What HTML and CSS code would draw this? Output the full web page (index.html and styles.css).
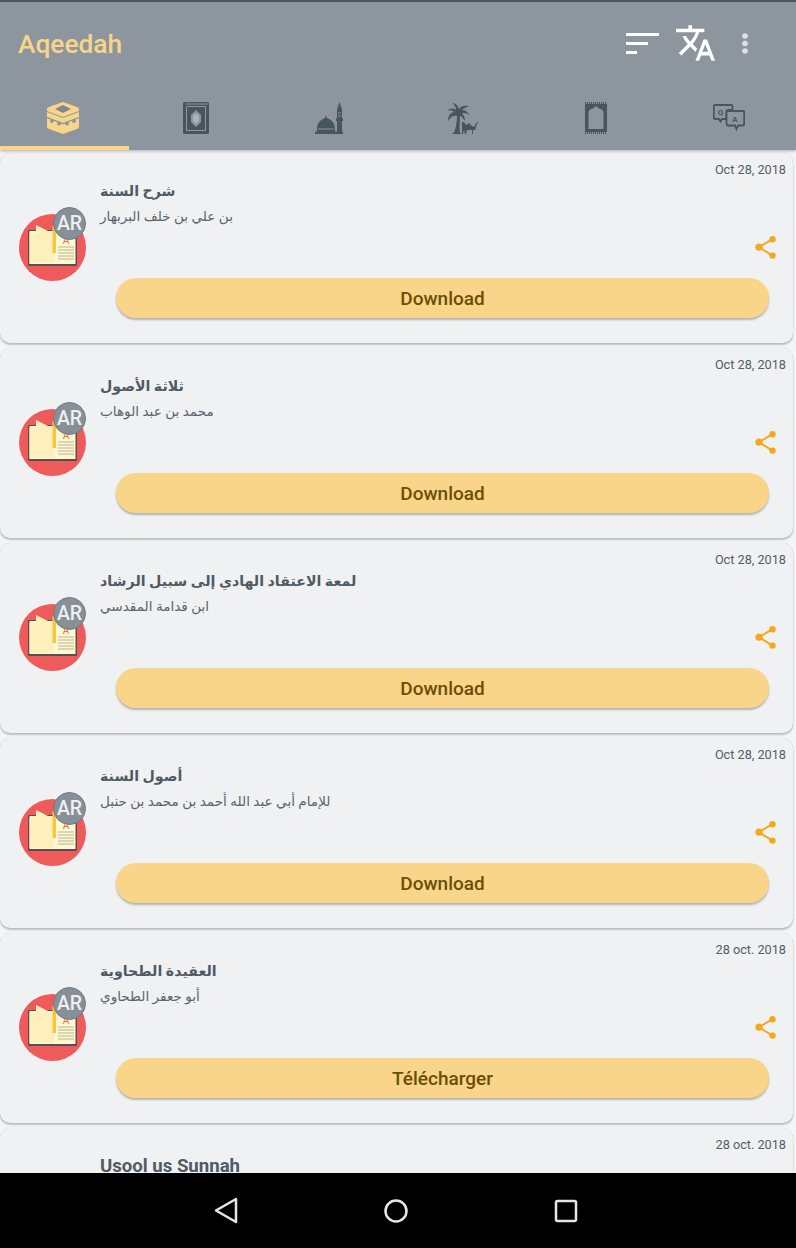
FILE: index.html
```html
<!DOCTYPE html>
<html lang="en">
<head>
    <meta charset="UTF-8">
    <meta name="viewport" content="width=device-width, initial-scale=1.0">
    <title>Aqeedah</title>
    <link rel="stylesheet" href="styles.css">
</head>
<body>
    <svg class="defs" width="0" height="0">
        <symbol id="cover" viewBox="0 0 67 67">
            <circle cx="33.5" cy="33.5" r="33.5" fill="#ef5b5b"/>
            <rect x="9" y="16" width="49" height="36" rx="1" fill="#5a4f50"/>
            <rect x="10.500" y="17" width="46" height="33" fill="#fff6d2"/>
            <path d="M17 11 35 20V49H10.500V19H17z" fill="#fdf0bd"/>
            <rect x="33.500" y="12" width="3.500" height="27" fill="#f8c63f"/>
            <text x="47" y="30" class="cover-a">A</text>
            <path d="M39 33H55M39 36H55M39 39H55M39 42H55M39 45H55" stroke="#b9b38f" stroke-width="1.200"/>
        </symbol>
        <symbol id="share" viewBox="0 0 24 24">
            <path d="M18.500 3.200 5 11.200 18.500 19.600" fill="none" stroke="#f5a81c" stroke-width="2"/>
            <circle cx="18.500" cy="3.200" r="3.200" fill="#f5a81c"/>
            <circle cx="5" cy="11.200" r="3.600" fill="#f5a81c"/>
            <circle cx="18.500" cy="19.600" r="3.200" fill="#f5a81c"/>
        </symbol>
    </svg>

    <div class="screen">
        <header class="appbar">
            <div class="toolbar">
                <h1 class="app-title">Aqeedah</h1>
                <div class="toolbar-actions">
                    <svg class="ic-sort" viewBox="0 0 33 21"><path d="M0 0H33V3H0zM0 9H22V12H0zM0 18H11V21H0z" fill="#fff"/></svg>
                    <svg class="ic-translate" viewBox="1 2 22 20"><path fill="#fff" d="M12.870 15.070l-2.540-2.510.03-.03c1.740-1.940 2.980-4.170 3.710-6.530H17V4h-7V2H8v2H1v1.990h11.170C11.500 7.920 10.440 9.750 9 11.350 8.070 10.320 7.300 9.190 6.690 8h-2c.73 1.630 1.730 3.170 2.980 4.560l-5.090 5.020L4 19l5-5 3.110 3.110.76-2.040zM18.500 10h-2L12 22h2l1.120-3h4.750L21 22h2l-4.500-12zm-2.620 7l1.620-4.330L19.120 17h-3.240z"/></svg>
                    <svg class="ic-more" viewBox="0 0 6 21"><circle cx="3" cy="3" r="2.800"/><circle cx="3" cy="10.500" r="2.800"/><circle cx="3" cy="18" r="2.800"/></svg>
                </div>
            </div>
            <nav class="tabs">
                <div class="tab active">
                    <svg width="32" height="32" viewBox="0 0 32 32">
                        <path fill="#f8d588" d="M16 0 30 5q2 1 2 2V25q0 1-2 2L16 32 2 27q-2-1-2-2V7q0-1 2-2z"/>
                        <path fill="#7d888f" d="M16 3 24 7 16 11 8 7z"/>
                        <path fill="none" stroke="#8d969e" stroke-width="1" d="M0 9.500 16 15.500 32 9.500"/>
                        <path fill="none" stroke="#8d969e" stroke-width="1.200" d="M0 15.500 16 21.500 32 15.500"/>
                        <g fill="#8d969e"><circle cx="5" cy="19" r="2"/><circle cx="12" cy="21.500" r="2"/><circle cx="20" cy="21.500" r="2"/><circle cx="27" cy="19" r="2"/></g>
                    </svg>
                </div>
                <div class="tab">
                    <svg width="26" height="32" viewBox="0 0 26 32">
                        <rect width="26" height="32" rx="1.500" fill="#47555f"/>
                        <path fill="none" stroke="#8d969e" d="M2.500 2H25M3.500 4.500H22.500V28.500H3.500z"/>
                        <path fill="#8d969e" d="M13 8 18 13V20L13 25 8 20V13z"/>
                        <ellipse cx="13" cy="16.500" rx="3" ry="4.500" fill="#aab2b8"/>
                    </svg>
                </div>
                <div class="tab">
                    <svg width="28" height="32" viewBox="0 0 28 32">
                        <path fill="#47555f" d="M0 32V29.500H2V27C2 20 7 17 10 16L11 13 12 16C15 17 20 20 20 27V29.500H22V19H21V16.500H22V7.500L24.500 0 27 7.500V16.500H28V19H27V29.500H28V32z"/>
                        <path fill="none" stroke="#8d969e" d="M3 27H19M23 11H26M23 14H26"/>
                    </svg>
                </div>
                <div class="tab">
                    <svg width="32" height="32" viewBox="0 0 32 32">
                        <path fill="#47555f" d="M4 32 7 31C9 25 10 19 10 14C7 13 4 14 1 19 1 14 3 11 7 10 5 8 3 8 1 9 3 6 6 6 9 8 9 5 7 2 5 1 9 1 11 4 12 7 14 4 17 3 22 4 19 5 16 7 15 8 18 8 21 10 23 13 20 11 17 11 15 11 17 13 18 16 18 19 16 16 14 14 13 14 13 20 12 26 13 31L16 32z"/>
                        <path fill="#47555f" d="M15 20H17L19 23 22 21 25 24 27 25 29 21 32 20 30 22 28 28 26 28V32H25V28H20L19 32H18L17 28 16 32H15V26z"/>
                    </svg>
                </div>
                <div class="tab">
                    <svg width="22" height="32" viewBox="0 0 22 32">
                        <path stroke="#47555f" stroke-width="2" stroke-dasharray="1 1" d="M0 1H22M0 31H22"/>
                        <rect y="2" width="22" height="28" fill="#47555f"/>
                        <path fill="#8d969e" d="M3.500 27V11C3.500 8 6 7 8 6.500L11 4 14 6.500C16 7 18.500 8 18.500 11V27z"/>
                    </svg>
                </div>
                <div class="tab">
                    <svg class="ic-qa" width="32" height="27" viewBox="0 0 32 27">
                        <path d="M2 1H18Q19.500 1 19.500 2.500V6H15Q13.500 6 13.500 7.500V15H9L7.500 17.500 6 15H2Q.8 15 .8 13.500V2.500Q.8 1 2 1z"/>
                        <path d="M15 7H30Q31.200 7 31.200 8.500V20Q31.200 21.500 30 21.500H25L23.500 25 22 21.500H15Q13.500 21.500 13.500 20V8.500Q13.500 7 15 7z"/>
                        <text x="7.500" y="11" class="qa-text">Q</text>
                        <text x="22" y="17.500" class="qa-text">A</text>
                    </svg>
                </div>
            </nav>
        </header>

        <main class="book-list">
            <article class="card">
                <div class="card-date">Oct 28, 2018</div>
                <div class="card-main">
                    <div class="cover">
                        <svg width="67" height="67"><use href="#cover"/></svg>
                        <span class="lang-badge">AR</span>
                    </div>
                    <div class="card-text">
                        <h2 class="book-title" dir="rtl">شرح السنة</h2>
                        <p class="book-author" dir="rtl">بن علي بن خلف البربهار</p>
                    </div>
                    <svg class="share"><use href="#share"/></svg>
                </div>
                <button class="download">Download</button>
            </article>

            <article class="card">
                <div class="card-date">Oct 28, 2018</div>
                <div class="card-main">
                    <div class="cover">
                        <svg width="67" height="67"><use href="#cover"/></svg>
                        <span class="lang-badge">AR</span>
                    </div>
                    <div class="card-text">
                        <h2 class="book-title" dir="rtl">ثلاثة الأصول</h2>
                        <p class="book-author" dir="rtl">محمد بن عبد الوهاب</p>
                    </div>
                    <svg class="share"><use href="#share"/></svg>
                </div>
                <button class="download">Download</button>
            </article>

            <article class="card">
                <div class="card-date">Oct 28, 2018</div>
                <div class="card-main">
                    <div class="cover">
                        <svg width="67" height="67"><use href="#cover"/></svg>
                        <span class="lang-badge">AR</span>
                    </div>
                    <div class="card-text">
                        <h2 class="book-title" dir="rtl">لمعة الاعتقاد الهادي إلى سبيل الرشاد</h2>
                        <p class="book-author" dir="rtl">ابن قدامة المقدسي</p>
                    </div>
                    <svg class="share"><use href="#share"/></svg>
                </div>
                <button class="download">Download</button>
            </article>

            <article class="card">
                <div class="card-date">Oct 28, 2018</div>
                <div class="card-main">
                    <div class="cover">
                        <svg width="67" height="67"><use href="#cover"/></svg>
                        <span class="lang-badge">AR</span>
                    </div>
                    <div class="card-text">
                        <h2 class="book-title" dir="rtl">أصول السنة</h2>
                        <p class="book-author" dir="rtl">للإمام أبي عبد الله أحمد بن محمد بن حنبل</p>
                    </div>
                    <svg class="share"><use href="#share"/></svg>
                </div>
                <button class="download">Download</button>
            </article>

            <article class="card">
                <div class="card-date">28 oct. 2018</div>
                <div class="card-main">
                    <div class="cover">
                        <svg width="67" height="67"><use href="#cover"/></svg>
                        <span class="lang-badge">AR</span>
                    </div>
                    <div class="card-text">
                        <h2 class="book-title" dir="rtl">العقيدة الطحاوية</h2>
                        <p class="book-author" dir="rtl">أبو جعفر الطحاوي</p>
                    </div>
                    <svg class="share"><use href="#share"/></svg>
                </div>
                <button class="download">Télécharger</button>
            </article>

            <article class="card">
                <div class="card-date">28 oct. 2018</div>
                <div class="card-main">
                    <div class="cover"></div>
                    <div class="card-text">
                        <h2 class="book-title latin">Usool us Sunnah</h2>
                    </div>
                </div>
            </article>
        </main>

        <footer class="navbar">
            <div class="nav-item"><svg width="24" height="27" viewBox="0 0 24 27"><path d="M22 2V25L2 13.500z"/></svg></div>
            <div class="nav-item"><svg width="24" height="24" viewBox="0 0 24 24"><circle cx="12" cy="12" r="10.500"/></svg></div>
            <div class="nav-item"><svg width="24" height="24" viewBox="0 0 24 24"><rect x="2" y="2" width="20" height="20" rx="1.500"/></svg></div>
        </footer>
    </div>
</body>
</html>
```

FILE: styles.css
```css
* {
    box-sizing: border-box;
}

html, body {
    margin: 0;
    height: 100%;
    overflow: hidden;
}

body {
    font-family: 'Roboto', 'DejaVu Sans', sans-serif;
    background-color: #f4f5f6;
}

.defs {
    position: absolute;
}

.screen {
    display: flex;
    flex-direction: column;
    height: 1248px;
}

/* top bar */
.appbar {
    height: 150px;
    flex-shrink: 0;
    background-color: #8d969e;
    border-top: 2px solid #4c5963;
    box-shadow: 0 1px 3px rgba(0,0,0,0.3);
    position: relative;
    z-index: 2;
}

.toolbar {
    height: 88px;
    display: flex;
    align-items: center;
    padding: 0 48px 6px 18px;
}

.app-title {
    margin: 0 0 -2px;
    font-size: 26.3px;
    font-weight: 500;
    color: #f8d588;
}

.toolbar-actions {
    margin-left: auto;
    display: flex;
    align-items: center;
}

.ic-sort {
    width: 33px;
    height: 21px;
    margin-right: 17px;
}

.ic-translate {
    width: 39px;
    height: 36px;
    margin-right: 27px;
}

.ic-more {
    width: 6px;
    height: 21px;
    fill: #dde1e4;
}

.tabs {
    display: flex;
    height: 60px;
    margin-left: -4px;
    width: 800px;
}

.tab {
    flex: 1;
    display: flex;
    align-items: flex-start;
    justify-content: center;
    padding-top: 12px;
    border-bottom: 4px solid transparent;
}

.tab.active {
    border-bottom-color: #f8d588;
}

.ic-qa {
    margin-top: 2px;
}

.ic-qa path {
    fill: #8d969e;
    stroke: #47555f;
    stroke-width: 1.8;
}

.qa-text {
    font-family: 'Roboto', sans-serif;
    font-size: 8px;
    font-weight: 700;
    fill: #47555f;
    text-anchor: middle;
}

/* book cards */
.book-list {
    flex: 1;
    overflow: hidden;
    padding-top: 3px;
}

.card {
    height: 190px;
    width: 793px;
    margin-bottom: 5px;
    background-color: #eff1f3;
    border-radius: 10px;
    box-shadow: 0 2px 2px rgba(0,0,0,0.22), 0 0 1px rgba(0,0,0,0.2);
}

.card-date {
    padding: 9px 7px 0 0;
    font-size: 12.7px;
    line-height: 16px;
    text-align: right;
    color: #525d66;
}

.card-main {
    display: flex;
    height: 100px;
}

.cover {
    width: 67px;
    height: 67px;
    margin: 36px 14px 0 19px;
    position: relative;
    flex-shrink: 0;
}

.lang-badge {
    position: absolute;
    top: -7px;
    right: 0;
    width: 33px;
    height: 33px;
    border-radius: 50%;
    background-color: #878f97;
    border: 1px solid #6f7a84;
    color: #eef0f2;
    font-size: 19.5px;
    font-weight: 500;
    line-height: 31px;
    text-align: center;
}

.card-text {
    flex: 1;
}

.book-title {
    margin: 1px 0 0;
    font-size: 14.2px;
    font-weight: 700;
    line-height: 24px;
    color: #4f5a64;
    text-align: left;
}

.book-title.latin {
    font-size: 18.6px;
}

.book-author {
    margin: 3px 0 0;
    font-size: 13.6px;
    line-height: 20px;
    color: #5a646d;
    text-align: left;
}

.share {
    width: 24px;
    height: 24px;
    margin: 58px 15px 0 0;
}

.download {
    display: block;
    width: 653px;
    height: 40px;
    margin-left: 116px;
    border: none;
    border-radius: 20px;
    background-color: #f8d588;
    box-shadow: 0 2px 2px rgba(0,0,0,0.25);
    font-family: 'Roboto', sans-serif;
    font-size: 19px;
    font-weight: 500;
    color: #6b4e05;
}

/* android nav */
.navbar {
    height: 75px;
    flex-shrink: 0;
    background-color: #000;
    display: flex;
    justify-content: center;
    align-items: center;
    padding-right: 4px;
    position: relative;
    z-index: 2;
}

.nav-item {
    width: 170px;
    display: flex;
    justify-content: center;
}

.nav-item svg {
    fill: none;
    stroke: #e6e6e6;
    stroke-width: 2.5;
    stroke-linejoin: round;
}

.cover-a {
    font-family: 'Roboto', sans-serif;
    font-size: 10px;
    fill: #e8703a;
    text-anchor: middle;
}
```
